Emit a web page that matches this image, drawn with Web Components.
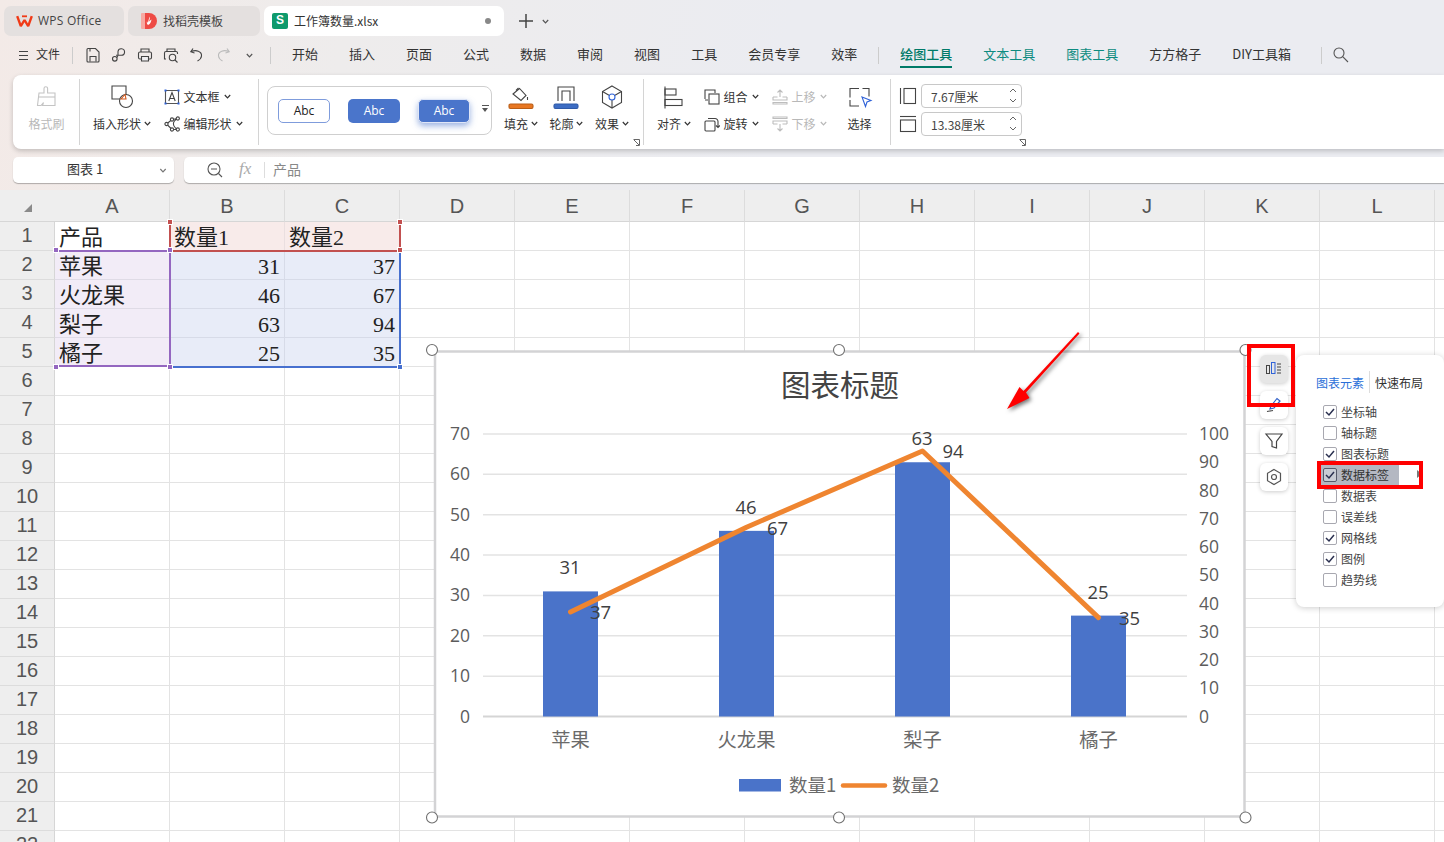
<!DOCTYPE html>
<html lang="zh-CN">
<head>
<meta charset="utf-8">
<title>工作簿数量.xlsx</title>
<style>
    html, body { margin: 0; height: 100%; }
    body {
        width: 1444px;
        height: 842px;
        overflow: hidden;
        position: relative;
        display: flex;
        flex-direction: column;
        font-family: "Noto Sans CJK SC", "Liberation Sans", sans-serif;
        background: linear-gradient(100deg, #f3eae7 0, #eeecec 22%, #ebecf1 50%);
        color: #333;
    }
</style>
</head>
<body>
<wps-tabbar></wps-tabbar>
<wps-menubar></wps-menubar>
<wps-ribbon></wps-ribbon>
<wps-formula></wps-formula>
<wps-sheet></wps-sheet>
<wps-chart></wps-chart>
<wps-chart-tools></wps-chart-tools>
<wps-elements-panel>
    <panel-item checked>坐标轴</panel-item>
    <panel-item>轴标题</panel-item>
    <panel-item checked>图表标题</panel-item>
    <panel-item checked active>数据标签</panel-item>
    <panel-item>数据表</panel-item>
    <panel-item>误差线</panel-item>
    <panel-item checked>网格线</panel-item>
    <panel-item checked>图例</panel-item>
    <panel-item>趋势线</panel-item>
</wps-elements-panel>
<wps-marks></wps-marks>

<script>
const CJK = '"Noto Sans CJK SC", "Liberation Sans", sans-serif';

function svg(size, body, color = '#444') {
    return `<svg width="${size}" height="${size}" viewBox="0 0 ${size} ${size}" fill="none" stroke="${color}" stroke-width="1.1">${body}</svg>`;
}

const CARET = `<svg class="caret" width="7" height="5" viewBox="0 0 7 5" fill="none" stroke="currentColor" stroke-width="1.2"><path d="M.8 1 3.5 3.8 6.2 1"/></svg>`;

const ICONS = {
    save: svg(18, '<path d="M3 3.5a1 1 0 0 1 1-1h7.5l3.5 3.5v9a1 1 0 0 1-1 1H4a1 1 0 0 1-1-1z"/><path d="M6 15.5V10.5h6v5M6 2.5v3"/>'),
    key: svg(18, '<path d="M8 9.5V5.5a3.3 3.3 0 1 1 3.3 3.8H6"/><circle cx="4.8" cy="12.8" r="2.3"/><path d="M6.8 11.5 8 9.5"/>'),
    print: svg(18, '<path d="M5 6V3h8v3"/><rect x="2.5" y="6" width="13" height="7" rx="1.5"/><path d="M5.5 10.5h7v4.500h-7z" fill="#f0eef0"/>'),
    preview: svg(18, '<path d="M5 5.5V3h8v2.500M4 13H2.500V7A1.500 1.500 0 0 1 4 5.500h10A1.500 1.500 0 0 1 15.500 7v1"/><circle cx="10.5" cy="11.5" r="3.2"/><path d="m13 14 2.5 2.5"/>'),
    undo: svg(18, '<path d="M5 2.5 2.8 5.800 6.500 7M3 5.800c5-2.500 11-.5 10.500 4.200-.3 2.500-2 4-4 5"/>'),
    redo: svg(18, '<path d="M13 2.5l2.200 3.300L11.500 7M15 5.800c-5-2.500-11-.5-10.500 4.200.3 2.500 2 4 4 5"/>', '#bbb'),
    search: svg(18, '<circle cx="7" cy="7" r="5"/><path d="m10.7 10.7 5.3 5.3"/>', '#555'),
    brush: svg(24, '<path d="M10 8V3.500a1.800 1.800 0 0 1 3.600 0V8H21v12.500H8.500l1-3-2.500 3H3.500L5 8z"/><path d="M4.500 12H21"/>', '#c4c4c4'),
    shape: svg(26, '<path d="M17 11V2H3v13h8"/><circle cx="17" cy="17" r="6.5"/><path d="M16 10.500 12 15h5z" stroke="#d2571b" fill="#fff"/>'),
    textbox: svg(16, '<path d="M1.500 1.500h13v13h-13z" stroke="#555"/><rect x=".5" y=".5" width="2" height="2" fill="#2f62d8" stroke="none"/><rect x="13.5" y=".5" width="2" height="2" fill="#2f62d8" stroke="none"/><rect x=".5" y="13.5" width="2" height="2" fill="#2f62d8" stroke="none"/><rect x="13.5" y="13.5" width="2" height="2" fill="#2f62d8" stroke="none"/><path d="M4.800 12 8 3.500l3.200 8.500M6 9.500h4"/>'),
    editshape: svg(16, '<path d="M2.500 8 8 3.500 14 2.500M2.500 8 8 13.500h5.500M14 2.500C8 5 8 10 13.500 13.500"/><circle cx="2.5" cy="8" r="1.6" fill="#fff"/><circle cx="8" cy="3.5" r="1.6" fill="#fff"/><circle cx="13.8" cy="2.5" r="1.6" fill="#fff"/><circle cx="8" cy="13.5" r="1.6" fill="#fff"/><circle cx="13.8" cy="13.5" r="1.6" fill="#fff"/>'),
    fill: `<svg width="26" height="26" viewBox="0 0 26 26" fill="none" stroke="#444" stroke-width="1.1"><path d="m5 10 6.500-5.500 6.500 7-5 5z"/><path d="M8 6.500 10.500 4M19.500 13v3"/><rect x="1" y="20" width="24" height="4.5" rx="1.5" fill="#e87722" stroke="#b95d16"/></svg>`,
    outline: `<svg width="26" height="26" viewBox="0 0 26 26" fill="none" stroke="#444" stroke-width="1.1"><path d="M5 17V3h16v14M9 17V7h8v10"/><rect x="1" y="20" width="24" height="4.5" rx="1.5" fill="#3d6dc4" stroke="#2f5aa8"/></svg>`,
    effect: `<svg width="26" height="26" viewBox="0 0 26 26" fill="none" stroke="#444" stroke-width="1.1"><path d="m13 2 9.500 5.500v11L13 24l-9.500-5.500v-11z"/><path d="m3.500 7.500 6.500 3.800M22.500 7.500 16 11.300M13 16v8"/><circle cx="13" cy="13" r="3" stroke="#2f62d8"/></svg>`,
    align: svg(26, '<path d="M4 2.500v22"/><rect x="4" y="5" width="11" height="6"/><rect x="4" y="15.5" width="17" height="6"/>'),
    group: svg(16, '<path d="M1 10V1h10v3M1 11h3"/><rect x="5" y="5" width="10" height="10"/><path d="M8 4h.01M15 4h.01M4 8h.01" stroke-width="1.6"/>'),
    rotate: svg(16, '<rect x="1" y="5" width="10" height="10" rx="1"/><path d="M4 2.500h7a3 3 0 0 1 3 3V11M12 9.500l2 2 2-2"/>'),
    up: svg(16, '<path d="M8 8V1M5.500 3.500 8 1l2.500 2.500M1 8h4.500M10.500 8H15M1 8v3h14V8M1 13.500h14V15H1z"/>', '#bdbdbd'),
    down: svg(16, '<path d="M8 8v7M5.500 12.500 8 15l2.500-2.500M1 8h4.500M10.500 8H15M1 8V5h14v3M1 1h14v1.500H1z"/>', '#bdbdbd'),
    select: `<svg width="26" height="26" viewBox="0 0 26 26" fill="none" stroke="#444" stroke-width="1.1"><path d="M12 4.500H3v9M3 16v6h9M15.500 4.500H22v8"/><path d="m15 13 9 3.500-4 1.500-1.500 4.500z" stroke="#2f62d8"/></svg>`,
    height: svg(18, '<path d="M1.500 1v16"/><rect x="5" y="1.5" width="11.5" height="15"/>'),
    width: svg(18, '<path d="M1 1.500h16"/><rect x="1.5" y="5" width="15" height="11.5"/>'),
    zoom: svg(18, '<circle cx="8" cy="8" r="6"/><path d="M5 8h6M12.500 12.500l3.500 3.500"/>', '#555'),
    launcher: `<svg width="7" height="7" viewBox="0 0 7 7" fill="none" stroke="#666" stroke-width="1"><path d="M.5 .5h6v6M1 1l5 5M3 6.500h3.500"/></svg>`
};

class WpsTabbar extends HTMLElement {
    constructor() {
        super();
        this.attachShadow({ mode: 'open' });
    }
    connectedCallback() {
        this.shadowRoot.innerHTML = `
            <style>
                :host { display: flex; height: 30px; padding: 6px 0 0 4px; gap: 4px; font: 12px ${CJK}; color: #444; align-items: stretch; }
                .tab { display: flex; align-items: center; border-radius: 7px; background: #e4e0df; box-sizing: border-box; }
                .tab span { padding-bottom: 2px; }
                .t1 { width: 120px; padding-left: 13px; }
                .t2 { width: 132px; padding-left: 13px; }
                .t3 { width: 240px; padding-left: 8px; background: #fff; position: relative; color: #333; }
                svg { flex: none; }
                .logo { margin-right: 6px; }
                .sheet-logo { width: 16px; height: 16px; background: #0e9a6c; border-radius: 2px; color: #fff; font: bold 12px "Liberation Sans", sans-serif; text-align: center; line-height: 15px; margin-right: 6px; }
                .dot { position: absolute; right: 13px; top: 12px; width: 6px; height: 6px; border-radius: 50%; background: #888; }
                .plus { margin-left: 10px; display: flex; align-items: center; gap: 8px; color: #555; }
            </style>
            <div class="tab t1">
                <svg class="logo" style="margin-left:-1px;margin-right:5px" width="17" height="13" viewBox="0 0 17 13" fill="none" stroke="#f03a17" stroke-width="2.4" stroke-linejoin="bevel"><path d="M1.2 1.200 4.800 11.200 8.500 5 12.200 11.200 15.800 1.200"/><path d="M6 1.300h5" stroke-width="1.8"/></svg>
                <span style="font-family:'Open Sans',sans-serif;letter-spacing:.25px">WPS Office</span>
            </div>
            <div class="tab t2">
                <svg class="logo" width="16" height="16" viewBox="0 0 16 16"><path d="M3 0h5a8 8 0 0 1 0 16H3z" fill="#ee4b45"/><path d="M0 1a1 1 0 0 1 1-1h3v16H1a1 1 0 0 1-1-1z" fill="#f7a9a2"/><path d="M8.500 3.500c.8 2-.2 3.500-.5 5 .8-.5 1.500-1.500 2.500-2-.3 2.500-1.500 5-3.500 5.500-1-1-1.500-2-1-4 .2 1 .6 1.500 1 1.600z" fill="#fff"/></svg>
                <span>找稻壳模板</span>
            </div>
            <div class="tab t3">
                <div class="sheet-logo">S</div>
                <span>工作簿数量.xlsx</span>
                <i class="dot"></i>
            </div>
            <div class="plus">
                <svg width="16" height="16" viewBox="0 0 16 16" stroke="#444" stroke-width="1.5"><path d="M8 1v14M1 8h14"/></svg>
                ${CARET}
            </div>`;
    }
}
customElements.define('wps-tabbar', WpsTabbar);

class WpsMenubar extends HTMLElement {
    constructor() {
        super();
        this.attachShadow({ mode: 'open' });
    }
    connectedCallback() {
        const tabs = ['开始', '插入', '页面', '公式', '数据', '审阅', '视图', '工具', '会员专享', '效率'];
        this.shadowRoot.innerHTML = `
            <style>
                :host { display: flex; height: 39px; align-items: center; padding-left: 19px; font: 13px ${CJK}; color: #333; box-sizing: border-box; padding-bottom: 1px; }
                .burger { width: 9px; height: 9px; border-top: 1px solid #444; border-bottom: 1px solid #444; position: relative; box-sizing: border-box; margin-right: 8px; }
                .burger::after { content: ""; position: absolute; left: 0; right: 0; top: 3px; border-top: 1px solid #444; }
                .file { font-size: 12px; padding-bottom: 3px; }
                .sep { width: 1px; height: 17px; background: #ccc; flex: none; }
                .quick { display: flex; margin: 0 8px 0 7px; }
                .quick span { width: 26px; display: flex; justify-content: center; align-items: center; color: #555; }
                .tabs { display: flex; gap: 31px; margin-left: 21px; padding-bottom: 3px; }
                .tools { display: flex; gap: 31px; margin-left: 21px; padding-bottom: 3px; }
                .tools span { position: relative; }
                .draw { color: #007a68; font-weight: 500; }
                .draw::after { content: ""; position: absolute; left: 0; right: 0; bottom: -5px; height: 2px; background: #007a68; }
                .teal { color: #0c8b80; }
            </style>
            <i class="burger"></i>
            <span class="file">文件</span>
            <i class="sep" style="margin-left:12px"></i>
            <div class="quick">
                <span>${ICONS.save}</span><span>${ICONS.key}</span><span>${ICONS.print}</span><span>${ICONS.preview}</span><span>${ICONS.undo}</span><span>${ICONS.redo}</span><span>${CARET}</span>
            </div>
            <i class="sep"></i>
            <div class="tabs">${tabs.map(t => `<span>${t}</span>`).join('')}</div>
            <i class="sep" style="margin-left:21px"></i>
            <div class="tools">
                <span class="draw">绘图工具</span>
                <span class="teal">文本工具</span>
                <span class="teal">图表工具</span>
                <span>方方格子</span>
                <span>DIY工具箱</span>
            </div>
            <i class="sep" style="margin-left:30px"></i>
            <span style="margin-left:10px;display:flex">${ICONS.search}</span>`;
    }
}
customElements.define('wps-menubar', WpsMenubar);

// large ribbon button: icon on top, label below
class RbBig extends HTMLElement {
    constructor() {
        super();
        this.attachShadow({ mode: 'open' });
    }
    connectedCallback() {
        const caret = this.hasAttribute('caret') ? CARET : '';
        this.shadowRoot.innerHTML = `
            <style>
                :host { display: grid; grid-template-rows: 27px 27px; justify-items: center; align-items: center; font-size: 12px; white-space: nowrap; }
                :host([off]) { color: #b8b8b8; }
                .label { display: flex; align-items: center; }
                .caret { margin-left: 2.5px; }
                .icon { display: flex; }
            </style>
            <div class="icon">${ICONS[this.getAttribute('icon')]}</div>
            <div class="label">${this.getAttribute('label')}${caret}</div>`;
    }
}
customElements.define('rb-big', RbBig);

class RbSmall extends HTMLElement {
    constructor() {
        super();
        this.attachShadow({ mode: 'open' });
    }
    connectedCallback() {
        this.shadowRoot.innerHTML = `
            <style>
                :host { display: flex; height: 27px; align-items: center; font-size: 12px; white-space: nowrap; }
                :host([off]) { color: #b8b8b8; }
                .icon { display: flex; margin-right: 4px; }
                .caret { margin-left: 4px; }
            </style>
            <span class="icon">${ICONS[this.getAttribute('icon')]}</span>${this.getAttribute('label')}${CARET}`;
    }
}
customElements.define('rb-small', RbSmall);

class RbSize extends HTMLElement {
    constructor() {
        super();
        this.attachShadow({ mode: 'open' });
    }
    connectedCallback() {
        this.shadowRoot.innerHTML = `
            <style>
                :host { display: flex; height: 28px; align-items: center; font-size: 12px; }
                .icon { display: flex; margin-right: 4px; }
                .box { width: 101px; height: 24px; border: 1px solid #c8c8c8; border-radius: 4px; box-sizing: border-box; display: flex; align-items: center; padding-left: 9px; position: relative; color: #444; }
                .spin { position: absolute; right: 4px; top: 3px; display: grid; gap: 5px; }
                svg.s { display: block; }
            </style>
            <span class="icon">${ICONS[this.getAttribute('icon')]}</span>
            <div class="box">${this.getAttribute('value')}
                <div class="spin">
                    <svg class="s" width="8" height="5" viewBox="0 0 8 5" fill="none" stroke="#666"><path d="M1 4 4 1l3 3"/></svg>
                    <svg class="s" width="8" height="5" viewBox="0 0 8 5" fill="none" stroke="#666"><path d="M1 1l3 3 3-3"/></svg>
                </div>
            </div>`;
    }
}
customElements.define('rb-size', RbSize);

class WpsRibbon extends HTMLElement {
    constructor() {
        super();
        this.attachShadow({ mode: 'open' });
    }
    connectedCallback() {
        this.shadowRoot.innerHTML = `
            <style>
                :host { display: flex; height: 74px; margin-left: 13px; background: #fff; border-radius: 8px 0 0 8px; box-shadow: 0 2px 5px rgba(0,0,0,.2); font: 12px ${CJK}; color: #333; position: relative; box-sizing: border-box; }
                .group { display: flex; position: relative; padding-top: 8px; box-sizing: border-box; height: 74px; }
                .group::after { content: ""; position: absolute; right: 0; top: 4px; bottom: 4px; width: 1px; background: #d4d4d4; }
                .end::after { display: none; }
                .col { display: flex; flex-direction: column; }
                .gallery { width: 225px; height: 49px; margin-top: 3px; border: 1px solid #cfcfcf; border-radius: 8px; box-sizing: border-box; display: flex; align-items: center; padding-left: 10px; gap: 18px; position: relative; font-family: "Open Sans", sans-serif; font-size: 12px; }
                .abc { width: 52px; height: 24px; border-radius: 5px; box-sizing: border-box; display: flex; align-items: center; justify-content: center; padding-bottom: 1px; }
                .a1 { background: #fff; border: 1.5px solid #7f9cdc; color: #222; }
                .a2 { background: #4a75cb; color: #fff; }
                .a3 { background: #4a75cb; color: #fff; border: 1px solid #dfe6f7; box-shadow: 0 3px 6px rgba(74,117,203,.55); }
                .more { position: absolute; right: 2px; top: 18px; width: 7px; }
                .more i { display: block; border-top: 1px solid #555; margin-bottom: 2px; }
                .more b { display: block; width: 0; border: 3.5px solid transparent; border-top: 4px solid #555; border-bottom: 0; }
                .launch { position: absolute; bottom: 3px; display: flex; }
            </style>
            <div class="group" style="width:67px;justify-content:center"><rb-big icon="brush" label="格式刷" off></rb-big></div>
            <div class="group" style="width:179px;padding-left:13px;gap:13px">
                <rb-big icon="shape" label="插入形状" caret></rb-big>
                <div class="col"><rb-small icon="textbox" label="文本框"></rb-small><rb-small icon="editshape" label="编辑形状"></rb-small></div>
            </div>
            <div class="group" style="width:385px;padding-left:8px;gap:12px">
                <div class="gallery">
                    <div class="abc a1">Abc</div><div class="abc a2">Abc</div><div class="abc a3">Abc</div>
                    <div class="more"><i></i><b></b></div>
                </div>
                <rb-big icon="fill" label="填充" caret></rb-big>
                <rb-big icon="outline" label="轮廓" caret></rb-big>
                <rb-big icon="effect" label="效果" caret></rb-big>
                <span class="launch" style="right:4px">${ICONS.launcher}</span>
            </div>
            <div class="group" style="width:247px;padding-left:13px">
                <rb-big icon="align" label="对齐" caret></rb-big>
                <div class="col" style="margin-left:13px"><rb-small icon="group" label="组合"></rb-small><rb-small icon="rotate" label="旋转"></rb-small></div>
                <div class="col" style="margin-left:13px"><rb-small icon="up" label="上移" off></rb-small><rb-small icon="down" label="下移" off></rb-small></div>
                <rb-big icon="select" label="选择" style="margin-left:20px"></rb-big>
            </div>
            <div class="group end" style="padding-left:8px;width:140px;padding-top:7px">
                <div class="col"><rb-size icon="height" value="7.67厘米"></rb-size><rb-size icon="width" value="13.38厘米"></rb-size></div>
                <span class="launch" style="left:128px">${ICONS.launcher}</span>
            </div>`;
    }
}
customElements.define('wps-ribbon', WpsRibbon);

class WpsFormula extends HTMLElement {
    constructor() {
        super();
        this.attachShadow({ mode: 'open' });
    }
    connectedCallback() {
        this.shadowRoot.innerHTML = `
            <style>
                :host { display: flex; height: 26px; margin: 8px 0 7px 13px; gap: 10px; font: 13px ${CJK}; color: #333; }
                .box { background: #fff; border-radius: 5px; box-shadow: 0 1px 1px rgba(0,0,0,.28); height: 26px; box-sizing: border-box; display: flex; align-items: center; }
                .name { width: 161px; position: relative; padding-left: 54px; }
                .name span, .val { padding-bottom: 3px; }
                .name svg { position: absolute; right: 6px; top: 11px; color: #777; width: 10px; }
                .bar { flex: 1; padding-left: 22px; border-radius: 5px 0 0 5px; }
                .fx { font: italic 17px "Liberation Serif", serif; color: #aaa; margin-left: 15px; width: 25px; padding-bottom: 2px; }
                .sep { width: 1px; height: 16px; background: #ddd; margin: 0 8px 0 0; }
                .val { font-size: 14px; color: #888; }
            </style>
            <div class="box name"><span>图表 1</span>${CARET}</div>
            <div class="box bar">
                ${ICONS.zoom}
                <span class="fx">fx</span>
                <i class="sep"></i>
                <span class="val">产品</span>
            </div>`;
    }
}
customElements.define('wps-formula', WpsFormula);

class WpsSheet extends HTMLElement {
    constructor() {
        super();
        this.attachShadow({ mode: 'open' });
    }
    connectedCallback() {
        const cols = 'ABCDEFGHIJKL'.split('');
        const data = [
            ['产品', '数量1', '数量2'],
            ['苹果', 31, 37],
            ['火龙果', 46, 67],
            ['梨子', 63, 94],
            ['橘子', 25, 35]
        ];
        let cells = `<div class="corner"><svg width="55" height="32"><path d="M32 14v8h-8z" fill="#8a8a8a"/></svg></div>`;
        cols.forEach(c => { cells += `<div class="colh">${c}</div>`; });
        cells += `<div class="colh"></div>`;
        for (let r = 0; r < 22; r++) {
            cells += `<div class="rowh">${r + 1}</div>`;
            cols.concat('').forEach((c, i) => {
                const v = data[r] ? data[r][i] : undefined;
                let cls = 'cell';
                if (r === 0 && (i === 1 || i === 2)) cls += ' red';
                if (r > 0 && r < 5 && i === 0) cls += ' purple';
                if (r > 0 && r < 5 && (i === 1 || i === 2)) cls += ' blue';
                if (typeof v === 'number') cls += ' num';
                cells += `<div class="${cls}">${v === undefined ? '' : v}</div>`;
            });
        }
        this.shadowRoot.innerHTML = `
            <style>
                :host { display: block; flex: 1; overflow: hidden; position: relative; background: #fff; }
                .grid { display: grid; grid-template-columns: 55px repeat(13, 115px); grid-template-rows: 32px; grid-auto-rows: 29px; }
                .corner, .colh, .rowh { background: #eeeeee; color: #555; font: 20px "Liberation Sans", sans-serif; display: flex; align-items: center; justify-content: center; box-sizing: border-box; }
                .colh { border-right: 1px solid #dcdcdc; border-bottom: 1px solid #d6d6d6; padding-top: 2px; }
                .corner { border-bottom: 1px solid #d6d6d6; }
                .rowh { border-bottom: 1px solid #dcdcdc; border-right: 1px solid #d6d6d6; padding-bottom: 2px; }
                .cell { border-right: 1px solid #e3e3e3; border-bottom: 1px solid #e3e3e3; box-sizing: border-box; font: 22px "Liberation Serif", "Noto Sans CJK SC", serif; color: #222; padding: 1px 4px 0; line-height: 29px; white-space: nowrap; overflow: visible; }
                .num { text-align: right; }
                .red { background: #f8ebea; border-color: #eadfe0; }
                .purple { background: #f2ecf7; border-color: #dfdbe6; }
                .blue { background: #e8ecf8; border-color: #d7dbe8; }
                .range { position: absolute; box-sizing: border-box; pointer-events: none; }
                .pp { left: 55px; top: 60px; width: 116px; height: 117px; border: 2px solid #9467c0; border-left: 0; }
                .rd { left: 169px; top: 32px; width: 232px; height: 30px; border: 2px solid #c25050; border-top: 0; }
                .bl { left: 169px; top: 60px; width: 232px; height: 118px; border: 2px solid #4770cf; border-left: 0; border-top: 0; }
                .h { position: absolute; width: 6px; height: 6px; box-sizing: border-box; border: 1px solid #fff; }
            </style>
            <div class="grid">${cells}</div>
            <div class="range rd"></div>
            <div class="range bl"></div>
            <div class="range pp"></div>
            <i class="h" style="left:167px;top:29px;background:#c25050"></i>
            <i class="h" style="left:397px;top:29px;background:#c25050"></i>
            <i class="h" style="left:397px;top:57px;background:#c25050"></i>
            <i class="h" style="left:397px;top:174px;background:#4770cf"></i>
            <i class="h" style="left:53px;top:57px;background:#9467c0"></i>
            <i class="h" style="left:167px;top:57px;background:#9467c0"></i>
            <i class="h" style="left:53px;top:174px;background:#9467c0"></i>
            <i class="h" style="left:167px;top:174px;background:#9467c0"></i>`;
    }
}
customElements.define('wps-sheet', WpsSheet);

class WpsChart extends HTMLElement {
    constructor() {
        super();
        this.attachShadow({ mode: 'open' });
    }
    connectedCallback() {
        // coordinates below are page coordinates, the viewBox starts where the host does
        const base = 716.5, topY = 434, xs = [570.5, 746.5, 922.5, 1098.5];
        const names = ['苹果', '火龙果', '梨子', '橘子'];
        const q1 = [31, 46, 63, 25], q2 = [37, 67, 94, 35];
        const y1 = v => base - (base - topY) * v / 70;
        const y2 = v => base - (base - topY) * v / 100;
        let g = '';
        for (let v = 0; v <= 70; v += 10) {
            const y = y1(v);
            g += `<line x1="483" x2="1187" y1="${y}" y2="${y}" stroke="${v ? '#e3e3e3' : '#d5d5d5'}" stroke-width="${v ? 1.5 : 2}"/>`;
            g += `<text class="axis" x="470" y="${y - 1}" text-anchor="end">${v}</text>`;
        }
        for (let v = 0; v <= 100; v += 10) {
            g += `<text class="axis" x="1199" y="${y2(v) - 1}">${v}</text>`;
        }
        xs.forEach((x, i) => {
            g += `<rect x="${x - 27.5}" y="${y1(q1[i])}" width="55" height="${base - y1(q1[i])}" fill="#4a73c9"/>`;
            g += `<text class="cat" x="${x}" y="739" text-anchor="middle">${names[i]}</text>`;
        });
        const pts = xs.map((x, i) => `${x},${y2(q2[i])}`).join(' ');
        g += `<polyline points="${pts}" fill="none" stroke="#ef8530" stroke-width="5" stroke-linecap="round" stroke-linejoin="round"/>`;
        const lab1 = [[570, 566], [746, 506], [922, 437], [1098, 591]];
        const lab2 = [[600.5, 611], [777.5, 527], [953, 450], [1129.5, 617]];
        lab1.forEach((p, i) => { g += `<text class="lab" x="${p[0]}" y="${p[1]}" text-anchor="middle">${q1[i]}</text>`; });
        lab2.forEach((p, i) => { g += `<text class="lab" x="${p[0]}" y="${p[1]}" text-anchor="middle">${q2[i]}</text>`; });
        const handles = [[432, 350], [839, 350], [1245.5, 350], [432, 817.5], [839, 817.5], [1245.5, 817.5]];
        const hs = handles.map(p => `<circle cx="${p[0]}" cy="${p[1]}" r="5.5" fill="#fff" stroke="#707070" stroke-width="1.1"/>`).join('');
        this.shadowRoot.innerHTML = `
            <style>
                :host { position: absolute; left: 425px; top: 342px; width: 830px; height: 484px; display: block; }
                svg { display: block; }
                text { dominant-baseline: central; }
                .axis { font: 17.5px "Open Sans", sans-serif; fill: #5c5c5c; }
                .lab { font: 18.5px "Open Sans", sans-serif; fill: #404040; }
                .cat { font: 19.3px "Noto Sans CJK SC", sans-serif; fill: #6a6a6a; }
                .leg { font: 18.5px "Noto Sans CJK SC", sans-serif; fill: #6a6a6a; }
                .title { font: 29.5px "Noto Sans CJK SC", sans-serif; fill: #444; }
            </style>
            <svg width="830" height="484" viewBox="425 342 830 484">
                <rect x="435" y="351.5" width="809.5" height="465" fill="#fff" stroke="#d3d3d5" stroke-width="2.5"/>
                <text class="title" x="840" y="383" text-anchor="middle">图表标题</text>
                ${g}
                <rect x="739" y="779" width="42" height="12.5" fill="#4a73c9"/>
                <text class="leg" x="789" y="784">数量1</text>
                <line x1="843" x2="885" y1="785.5" y2="785.5" stroke="#ef8530" stroke-width="4.5" stroke-linecap="round"/>
                <text class="leg" x="892" y="784">数量2</text>
                ${hs}
            </svg>`;
    }
}
customElements.define('wps-chart', WpsChart);

class WpsChartTools extends HTMLElement {
    constructor() {
        super();
        this.attachShadow({ mode: 'open' });
    }
    connectedCallback() {
        this.shadowRoot.innerHTML = `
            <style>
                :host { position: absolute; left: 1260px; top: 355px; display: flex; flex-direction: column; gap: 8px; }
                .b { width: 28px; height: 28px; border-radius: 6px; background: #fff; box-shadow: 0 1px 4px rgba(0,0,0,.2); display: flex; align-items: center; justify-content: center; }
                .on { background: #e6e6e6; }
            </style>
            <div class="b on"><svg width="18" height="18" viewBox="0 0 18 18" fill="none" stroke="#444"><rect x="1.5" y="5.5" width="3" height="8"/><rect x="6.5" y="2.5" width="3.5" height="11" stroke="#2f62d8"/><path d="M12 4h4M12 7h4M12 10h4M12 13h4"/></svg></div>
            <div class="b"><svg width="18" height="18" viewBox="0 0 18 18" fill="none" stroke="#2f5fc8" stroke-width="1.2"><path d="m6 10 6-7.500 3 2.500-6 7-4 1z"/><path d="M2 15.500c2-.5 4-.5 6-1" stroke="#444"/></svg></div>
            <div class="b"><svg width="20" height="20" viewBox="0 0 20 20" fill="none" stroke="#444" stroke-width="1.2"><path d="M2 3h16l-5.500 7.500V17l-4.500-1.500v-5z"/></svg></div>
            <div class="b"><svg width="18" height="18" viewBox="0 0 18 18" fill="none" stroke="#555" stroke-width="1.2"><path d="m9 1.500 6.500 3.750v7.500L9 16.500l-6.500-3.750v-7.500z"/><circle cx="9" cy="9" r="2.5"/></svg></div>`;
    }
}
customElements.define('wps-chart-tools', WpsChartTools);

class PanelItem extends HTMLElement {
    constructor() {
        super();
        this.attachShadow({ mode: 'open' });
    }
    connectedCallback() {
        const mark = this.hasAttribute('checked')
            ? '<svg width="14" height="14" viewBox="0 0 14 14" fill="none" stroke="#2a3050" stroke-width="1.5"><path d="m3 7 3 3 5-6"/></svg>' : '';
        this.shadowRoot.innerHTML = `
            <style>
                :host { display: flex; align-items: center; height: 21px; width: 79px; box-sizing: border-box; padding-left: 3px; font-size: 12px; color: #444; white-space: nowrap; position: relative; }
                :host([active]) { background: #b4b8c2; color: #333; }
                .box { width: 14px; height: 14px; border: 1px solid #a8a8b0; border-radius: 2px; box-sizing: border-box; margin-right: 4px; flex: none; background: #fff; display: flex; align-items: center; justify-content: center; }
                :host([active]) .box { border-color: #555a6a; background: #c8ccd4; }
                svg { flex: none; margin: -1px; }
                .arrow { display: none; position: absolute; left: 97px; top: 6px; width: 0; height: 0; border: 4.5px solid transparent; border-left: 5px solid #777; border-right: 0; }
                :host([active]) .arrow { display: block; }
            </style>
            <span class="box">${mark}</span><slot></slot><i class="arrow"></i>`;
    }
}
customElements.define('panel-item', PanelItem);

class WpsElementsPanel extends HTMLElement {
    constructor() {
        super();
        this.attachShadow({ mode: 'open' });
    }
    connectedCallback() {
        this.shadowRoot.innerHTML = `
            <style>
                :host { position: absolute; left: 1296px; top: 355px; width: 148px; height: 252px; box-sizing: border-box; padding: 18px 0 0 24px; background: #fff; border-radius: 8px; box-shadow: 0 1px 6px rgba(0,0,0,.2); font: 12px ${CJK}; display: block; }
                .head { display: flex; height: 18px; align-items: center; margin: 0 0 10px -4px; }
                .head span { color: #333; }
                .head .cur { color: #2b6fd8; }
                .head i { width: 1px; height: 22px; background: #ddd; margin: 0 5px; }
            </style>
            <div class="head"><span class="cur">图表元素</span><i></i><span>快速布局</span></div>
            <div class="items"><slot></slot></div>`;
    }
}
customElements.define('wps-elements-panel', WpsElementsPanel);

// red boxes and the arrow somebody drew on the screenshot
class WpsMarks extends HTMLElement {
    constructor() {
        super();
        this.attachShadow({ mode: 'open' });
    }
    connectedCallback() {
        this.shadowRoot.innerHTML = `
            <style>
                :host { position: absolute; inset: 0; pointer-events: none; display: block; }
                .r { position: absolute; border: 4px solid #f00; box-sizing: border-box; }
                svg { position: absolute; left: 0; top: 0; filter: drop-shadow(2px 2px 2px rgba(0,0,0,.55)); }
            </style>
            <div class="r" style="left:1247px;top:344px;width:48px;height:63px"></div>
            <div class="r" style="left:1317px;top:461px;width:106px;height:28px"></div>
            <svg width="1444" height="842" viewBox="0 0 1444 842"><path d="M1079.5 333.5 1026 392.5 1029.5 398 1007 409 1019.5 387 1023.5 391 1078 332z" fill="#f00"/></svg>`;
    }
}
customElements.define('wps-marks', WpsMarks);
</script>
</body>
</html>
